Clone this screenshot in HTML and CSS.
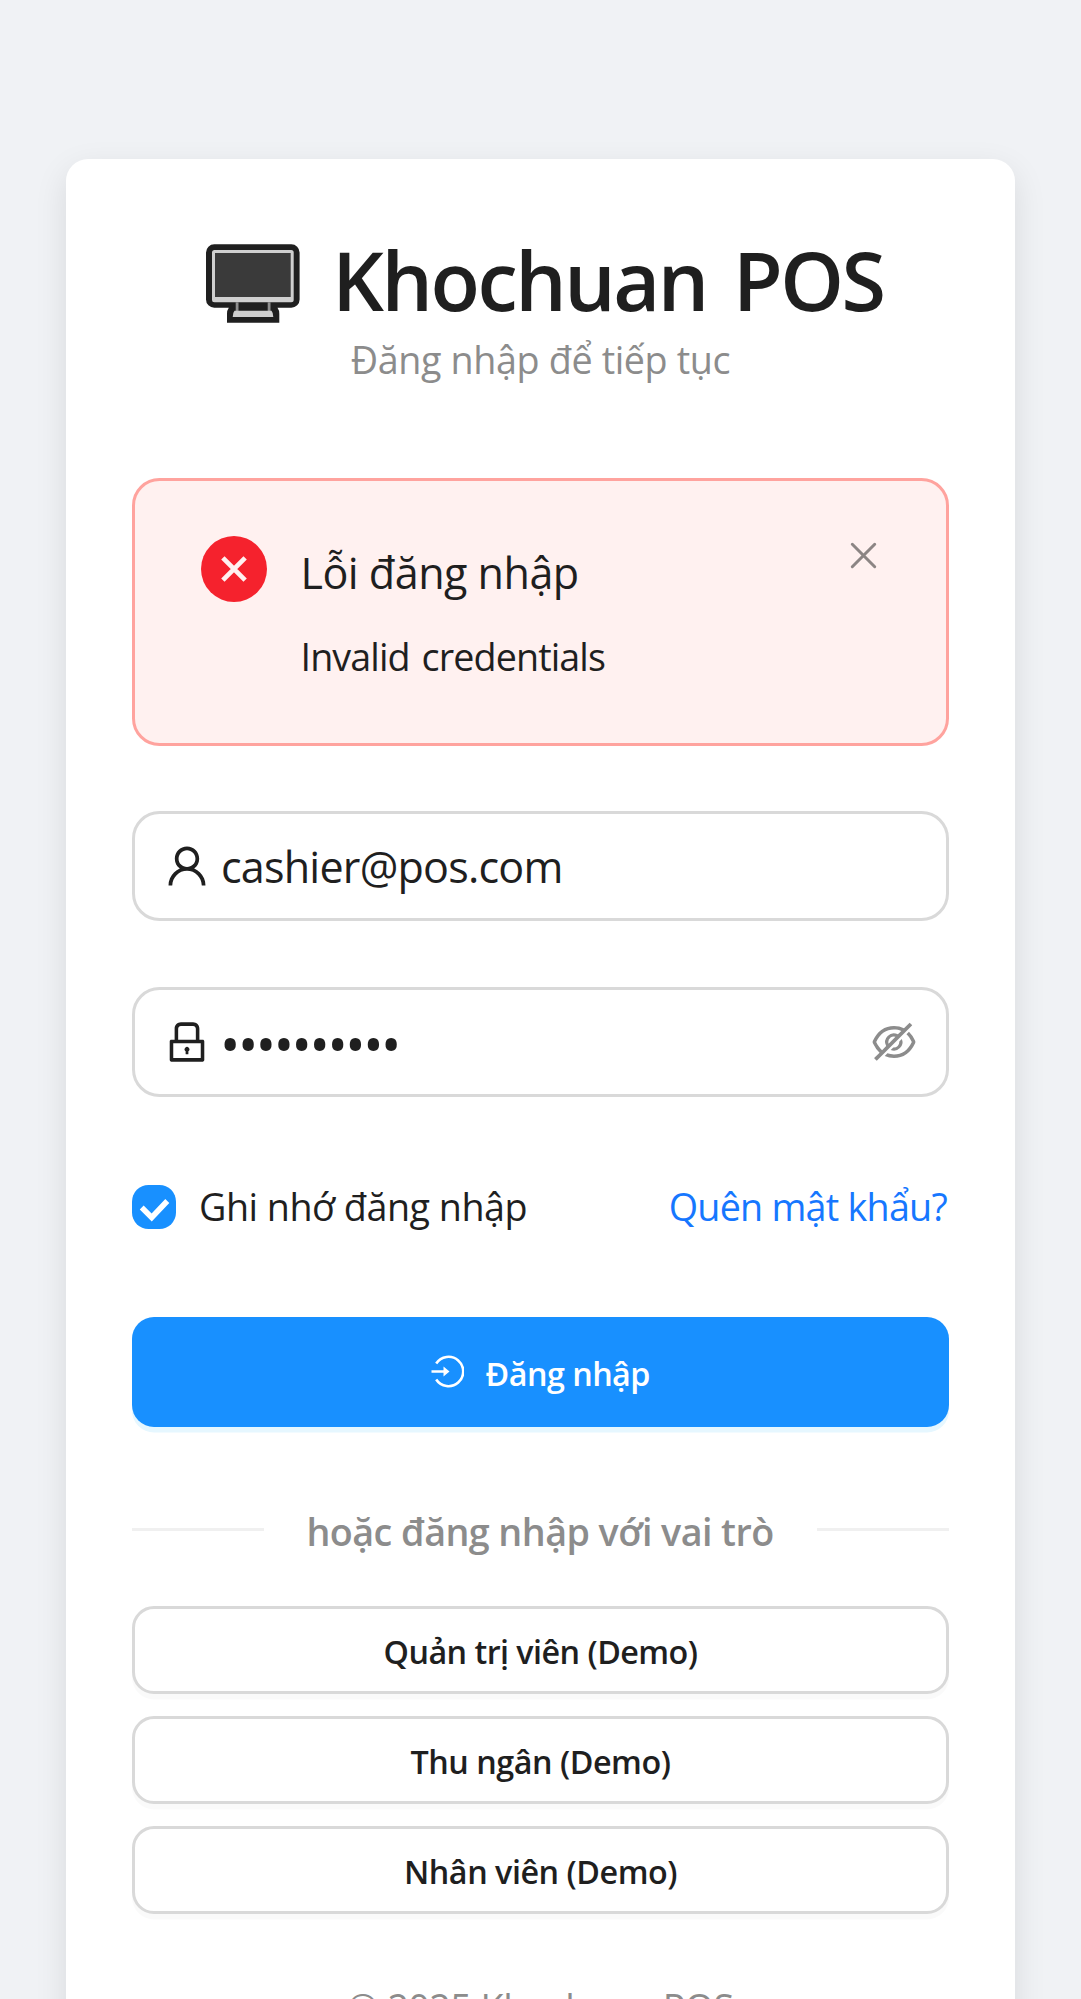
FILE: index.html
```html
<!DOCTYPE html>
<html lang="vi">
<head>
<meta charset="utf-8">
<title>Khochuan POS</title>
<link rel="stylesheet" href="styles.css">
</head>
<body>
<main class="card">
  <h1 class="title">
    <svg class="title-icon" viewBox="0 0 94 79">
      <path fill="#1f1f1f" d="M8.3.3h77a8.3 8.3 0 0 1 8.3 8.3v46.8a8.3 8.3 0 0 1-8.3 8.3H71.5q1.8 2.5 1.8 6v9H21v-9q0-3.500 1.800-6H8.300A8.300 8.300 0 0 1 0 55.400V8.600A8.300 8.300 0 0 1 8.300.3z"/>
      <rect x="6" y="6" width="81.700" height="52.300" rx="2.500" fill="#cfcfcf"/>
      <rect x="9" y="9" width="75.700" height="44" fill="#3a3a3a"/>
      <path fill="#8f8f8f" d="M29.700 58.300h2.800V67h-2.800zM61.700 58.300h2.800V67h-2.800z"/>
      <path fill="#cfcfcf" d="M28.500 66.700h37q1.800 2 1.800 6.300H26.700q0-4.300 1.800-6.300z"/>
    </svg>
    <span>Khochuan POS</span>
  </h1>
  <p class="subtitle">Đăng nhập để tiếp tục</p>

  <section class="alert">
    <svg class="alert-icon" viewBox="64 64 896 896">
      <circle cx="512" cy="512" r="448" fill="#f5222d"/>
      <path d="M361 361l302 302M663 361L361 663" stroke="#fff1f0" stroke-width="64"/>
    </svg>
    <div class="alert-body">
      <div class="alert-title">Lỗi đăng nhập</div>
      <div class="alert-text">Invalid credentials</div>
    </div>
    <svg class="alert-close" viewBox="0 0 33 33">
      <path d="M5.300 5.300l22.400 22.400M27.700 5.300L5.300 27.700" stroke="#8c8584" stroke-width="3" stroke-linecap="round"/>
    </svg>
  </section>

  <div class="field">
    <svg class="field-icon" viewBox="64 64 896 896"><path d="M858.5 763.6a374 374 0 00-80.6-119.5 375.63 375.63 0 00-119.5-80.6c-.4-.2-.8-.3-1.2-.5C719.5 518 760 444.700 760 362c0-137-111-248-248-248S264 225 264 362c0 82.700 40.500 156 102.800 201.100-.4.2-.8.3-1.200.5-44.800 18.900-85 46-119.500 80.600a375.630 375.630 0 00-80.600 119.500A371.700 371.700 0 00136 901.800a8 8 0 008 8.200h60c4.400 0 7.900-3.500 8-7.800 2-77.200 33-149.500 87.800-204.300 56.700-56.700 132-87.900 212.200-87.900s155.500 31.200 212.200 87.900C779 752.700 810 825 812 902.200c.1 4.400 3.600 7.800 8 7.800h60a8 8 0 008-8.200c-1-47.800-10.900-94.300-29.500-138.200zM512 534c-45.900 0-89.100-17.900-121.600-50.400S340 407.900 340 362c0-45.900 17.900-89.100 50.400-121.600S466.100 190 512 190s89.100 17.900 121.600 50.400S684 316.100 684 362c0 45.900-17.900 89.100-50.400 121.600S557.900 534 512 534z"/></svg>
    <span class="field-value">cashier@pos.com</span>
  </div>

  <div class="field">
    <svg class="field-icon" viewBox="64 64 896 896"><path d="M832 464h-68V240c0-70.700-57.300-128-128-128H388c-70.700 0-128 57.300-128 128v224h-68c-17.700 0-32 14.300-32 32v384c0 17.700 14.300 32 32 32h640c17.700 0 32-14.300 32-32V496c0-17.700-14.300-32-32-32zM332 240c0-30.900 25.100-56 56-56h248c30.900 0 56 25.100 56 56v224H332V240zm460 600H232V536h560v304zM484 701v53c0 4.400 3.600 8 8 8h40c4.400 0 8-3.600 8-8v-53a48.010 48.010 0 10-56 0z"/></svg>
    <span class="field-value password">••••••••••</span>
    <svg class="field-icon eye" viewBox="64 64 896 896"><path d="M942.200 486.200Q889.470 375.110 816.700 305l-50.880 50.880C807.310 395.530 843.450 447.400 874.700 512 791.500 684.200 673.400 766 512 766q-72.670 0-133.870-22.380L323 798.750Q408 838 512 838q288.300 0 430.200-300.300a60.290 60.290 0 000-51.500zm-63.570-320.640L836 122.880a8 8 0 00-11.320 0L715.310 232.200Q624.860 186 512 186q-288.300 0-430.200 300.300a60.300 60.300 0 000 51.500q56.690 119.400 136.500 191.410L112.480 835a8 8 0 000 11.310L155.170 889a8 8 0 0011.310 0l712.150-712.120a8 8 0 000-11.320zM149.300 512C232.600 339.800 350.700 258 512 258c54.540 0 104.130 9.360 149.120 28.390l-70.300 70.300a176 176 0 00-238.130 238.130l-83.420 83.420C223.100 637.490 183.300 582.280 149.300 512zm246.700 0a112.110 112.110 0 01146.200-106.690L401.310 546.200A112 112 0 01396 512z"/><path d="M508 624c-3.460 0-6.870-.16-10.250-.47l-52.820 52.820a176.090 176.090 0 00227.420-227.420l-52.820 52.820c.31 3.380.47 6.790.47 10.250a111.940 111.940 0 01-112 112z"/></svg>
  </div>

  <div class="options">
    <label class="remember">
      <svg class="checkbox" viewBox="0 0 44 44">
        <rect width="44" height="44" rx="16.500" fill="#1890ff"/>
        <path d="M9.700 22.500l10 10L35.300 16" fill="none" stroke="#fff" stroke-width="5.500"/>
      </svg>
      <span class="remember-text">Ghi nhớ đăng nhập</span>
    </label>
    <a class="forgot">Quên mật khẩu?</a>
  </div>

  <button class="submit">
    <svg class="submit-icon" viewBox="0 0 33 33">
      <path d="M5.200 8.500a14.700 14.700 0 1 1 0 16" fill="none" stroke="#fff" stroke-width="2.600"/>
      <path d="M.5 15.300h12v-3.800l6 5-6 5v-3.800H.5z" fill="#fff"/>
    </svg>
    <span class="submit-text">Đăng nhập</span>
  </button>

  <div class="divider"><span class="divider-text">hoặc đăng nhập với vai trò</span></div>

  <div class="roles">
    <button class="role admin">Quản trị viên (Demo)</button>
    <button class="role">Thu ngân (Demo)</button>
    <button class="role">Nhân viên (Demo)</button>
  </div>

  <footer class="footer">© 2025 Khochuan POS</footer>
</main>
</body>
</html>
```
FILE: styles.css
```css
* { box-sizing: border-box; }

body {
  margin: 0;
  height: 1999px;
  padding: 159.300px 66px 0;
  overflow: hidden;
  background: #f0f2f5;
  color: #1f1f1f;
  font-family: "Open Sans", "Noto Sans", sans-serif;
  font-size: 37.700px;
  line-height: 60.500px;
}

svg { display: block; flex: none; }

.card {
  height: 2000px;
  padding: 71px 66px 0;
  border-radius: 22px;
  background: #fff;
  box-shadow: 0 11px 33px rgba(0, 0, 0, 0.1);
}

.title {
  display: flex;
  justify-content: center;
  align-items: center;
  gap: 32px;
  height: 100px;
  margin: 0;
  font-size: 81px;
  font-weight: 600;
  line-height: 100px;
  letter-spacing: -2.450px;
  word-spacing: 7.500px;
  white-space: nowrap;
}

.title-icon { width: 94px; height: 79px; margin: 6px 0 0 9px; }

.subtitle {
  margin: 0 0 87.700px;
  color: #8c8c8c;
  text-align: center;
  letter-spacing: -0.380px;
}

.alert {
  display: flex;
  height: 267.300px;
  margin-bottom: 65.300px;
  padding: 55px 66px 0;
  border: 3px solid #ffa39e;
  border-radius: 27.500px;
  background: #fff1f0;
}

.alert-icon { width: 66px; height: 66px; margin-right: 33.500px; }
.alert-body { flex: 1; padding-top: 4px; }
.alert-title { font-size: 43.100px; line-height: 66px; letter-spacing: -0.530px; }
.alert-text { margin-top: 20.700px; letter-spacing: -0.900px; word-spacing: 3px; }
.alert-close { width: 33px; height: 33px; margin-top: 3px; }

.field {
  display: flex;
  align-items: center;
  height: 110px;
  margin-bottom: 66px;
  padding: 0 30px;
  border: 3px solid #d9d9d9;
  border-radius: 27.500px;
}

.field-icon { width: 44px; height: 44px; fill: #1f1f1f; }
.eye { fill: #8c8c8c; }
.field-value { flex: 1; margin-left: 12px; padding-top: 2px; font-size: 43.100px; letter-spacing: -0.800px; }
.password { margin-left: 11px; padding-top: 4px; font-size: 54px; letter-spacing: -2.400px; }

.options {
  display: flex;
  justify-content: space-between;
  align-items: center;
  margin: 79.500px 0 80px;
}

.remember { display: flex; align-items: center; gap: 23px; }
.checkbox { width: 44px; height: 44px; }
.remember-text { letter-spacing: -0.500px; }
.forgot { margin-right: 2px; color: #1677ff; letter-spacing: -0.750px; }

.submit {
  display: flex;
  justify-content: center;
  align-items: center;
  gap: 21.500px;
  width: 100%;
  height: 109.700px;
  padding: 0;
  border: 0;
  border-radius: 22px;
  background: #1890ff;
  box-shadow: 0 5.500px 0 #e6f7ff;
  color: #fff;
  font: 600 32.300px/52px "Open Sans", "Noto Sans", sans-serif;
  letter-spacing: -0.530px;
}

.submit-icon { width: 33px; height: 33px; }
.submit-text { padding-top: 2px; }

.divider {
  display: flex;
  align-items: center;
  margin-top: 75.500px;
  color: #8c8c8c;
  font-weight: 600;
  letter-spacing: -0.560px;
}

.divider::before,
.divider::after {
  content: "";
  flex: 1;
  height: 3px;
  margin-bottom: 6px;
  background: #f0f0f0;
}

.divider-text { padding: 0 43px 0 42px; }

.roles { display: flex; flex-direction: column; gap: 22px; margin-top: 43.200px; }

.role {
  height: 88px;
  padding: 3px 0 0;
  border: 3px solid #d9d9d9;
  border-radius: 22px;
  background: #fff;
  box-shadow: 0 5.500px 0 rgba(0, 0, 0, 0.02);
  color: #1f1f1f;
  font: 600 32.300px/52px "Open Sans", "Noto Sans", sans-serif;
  letter-spacing: -0.470px;
}

.admin { letter-spacing: -0.540px; }

.footer {
  margin-top: 64.500px;
  color: #8c8c8c;
  text-align: center;
  letter-spacing: -0.550px;
}
```
